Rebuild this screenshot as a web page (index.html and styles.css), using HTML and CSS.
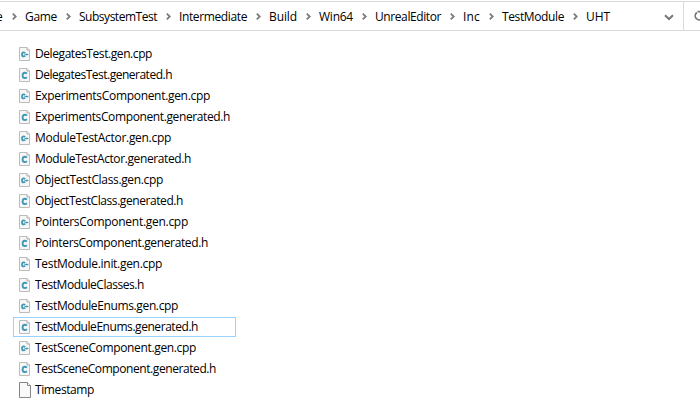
FILE: index.html
```
<!DOCTYPE html>
<html lang="en">
<head>
<meta charset="utf-8">
<title>UHT</title>
<link rel="stylesheet" href="styles.css">
</head>
<body>
<svg width="0" height="0" class="defs">
  <symbol id="sep" viewBox="0 0 5 7"><path d="M.8 .7 3.7 3.5.8 6.3" fill="none" stroke="#7c7c7c" stroke-width="1.8"/></symbol>
  <symbol id="page" viewBox="0 0 11 14"><path d="M.5.5H8L10.5 3v10.5H.5Z" fill="#f7f7f7" stroke="#bcbcbc"/><path d="M8 .5V3h2.5" fill="#fff" stroke="#aaa"/></symbol>
  <symbol id="h" viewBox="0 0 11 14"><use href="#page" width="11" height="14"/><path d="M8 5.5C7.2 4.9 6.6 4.8 5.8 4.8 4.3 4.8 3.6 5.9 3.6 7.4S4.3 10 5.8 10C6.7 10 7.3 9.8 8 9.3" fill="none" stroke="#4298b5" stroke-width="1.9"/></symbol>
  <symbol id="cpp" viewBox="0 0 11 14"><use href="#page" width="11" height="14"/><path d="M6.2 6C5.7 5.6 5.2 5.4 4.6 5.4 3.5 5.4 3 6.2 3 7.4S3.5 9.4 4.6 9.4C5.2 9.4 5.7 9.2 6.2 8.8" fill="none" stroke="#4298b5" stroke-width="1.8"/><path d="M5.5 7.5H9.4M7.8 6.5v2" fill="none" stroke="#4298b5" stroke-width="1.1"/></symbol>
  <symbol id="blank" viewBox="0 0 12 16"><path d="M.5.5H8.5L11.5 3.5v12H.5Z" fill="#f9f9f9" stroke="#858585"/><path d="M8.5.5v3h3" fill="#fff" stroke="#858585"/></symbol>
</svg>
<header class="bar">
  <nav class="path">
    <span class="edge">e</span><svg class="sep"><use href="#sep"/></svg>
    <span class="fit" data-w="32">Game</span><svg class="sep"><use href="#sep"/></svg>
    <span class="fit" data-w="78">SubsystemTest</span><svg class="sep"><use href="#sep"/></svg>
    <span class="fit" data-w="68">Intermediate</span><svg class="sep"><use href="#sep"/></svg>
    <span class="fit" data-w="28">Build</span><svg class="sep"><use href="#sep"/></svg>
    <span class="fit" data-w="34">Win64</span><svg class="sep"><use href="#sep"/></svg>
    <span class="fit" data-w="66">UnrealEditor</span><svg class="sep"><use href="#sep"/></svg>
    <span class="fit" data-w="17">Inc</span><svg class="sep"><use href="#sep"/></svg>
    <span class="fit" data-w="62">TestModule</span><svg class="sep"><use href="#sep"/></svg>
    <span class="fit" data-w="24">UHT</span>
  </nav>
  <svg class="drop" viewBox="0 0 10 7"><path d="M1 1.2 5 5 9 1.2" fill="none" stroke="#777" stroke-width="2"/></svg>
  <div class="refresh"><svg width="12" height="12" viewBox="0 0 12 12"><path d="M3.5 1.7H7.8V5.5M2.9 2.5A4.1 4.1 0 1 0 9 4" fill="none" stroke="#777" stroke-width="1.7"/></svg></div>
</header>
<ul class="files">
  <li><svg class="icon"><use href="#cpp"/></svg><span class="fit" data-w="117">DelegatesTest.gen.cpp</span></li>
  <li><svg class="icon"><use href="#h"/></svg><span class="fit" data-w="137">DelegatesTest.generated.h</span></li>
  <li><svg class="icon"><use href="#cpp"/></svg><span class="fit" data-w="175">ExperimentsComponent.gen.cpp</span></li>
  <li><svg class="icon"><use href="#h"/></svg><span class="fit" data-w="195">ExperimentsComponent.generated.h</span></li>
  <li><svg class="icon"><use href="#cpp"/></svg><span class="fit" data-w="136">ModuleTestActor.gen.cpp</span></li>
  <li><svg class="icon"><use href="#h"/></svg><span class="fit" data-w="156">ModuleTestActor.generated.h</span></li>
  <li><svg class="icon"><use href="#cpp"/></svg><span class="fit" data-w="128">ObjectTestClass.gen.cpp</span></li>
  <li><svg class="icon"><use href="#h"/></svg><span class="fit" data-w="148">ObjectTestClass.generated.h</span></li>
  <li><svg class="icon"><use href="#cpp"/></svg><span class="fit" data-w="153">PointersComponent.gen.cpp</span></li>
  <li><svg class="icon"><use href="#h"/></svg><span class="fit" data-w="173">PointersComponent.generated.h</span></li>
  <li><svg class="icon"><use href="#cpp"/></svg><span class="fit" data-w="127">TestModule.init.gen.cpp</span></li>
  <li><svg class="icon"><use href="#h"/></svg><span class="fit" data-w="109">TestModuleClasses.h</span></li>
  <li><svg class="icon"><use href="#cpp"/></svg><span class="fit" data-w="143">TestModuleEnums.gen.cpp</span></li>
  <li class="focused"><svg class="icon"><use href="#h"/></svg><span class="fit" data-w="163">TestModuleEnums.generated.h</span></li>
  <li><svg class="icon"><use href="#cpp"/></svg><span class="fit" data-w="161">TestSceneComponent.gen.cpp</span></li>
  <li><svg class="icon"><use href="#h"/></svg><span class="fit" data-w="181">TestSceneComponent.generated.h</span></li>
  <li><svg class="icon blank"><use href="#blank"/></svg><span class="fit" data-w="59">Timestamp</span></li>
</ul>
<script src="fit.js"></script>
</body>
</html>
```
FILE: styles.css
```
* { box-sizing: border-box; }
body {
  margin: 0;
  height: 418px;
  overflow: hidden;
  background: #fff;
  color: #000;
  font: 12px/20px "Segoe UI", "Open Sans", "Noto Sans", sans-serif;
}
.defs { display: block; }
.bar {
  display: flex;
  align-items: center;
  width: 712px;
  height: 30px;
  margin-top: 1px;
  border-top: 1px solid #d9d9d9;
  border-bottom: 1px solid #d9d9d9;
}
.path {
  display: flex;
  align-items: center;
  flex: none;
  width: 665px;
}
.path span { flex: none; padding-top: 1px; white-space: nowrap; }
.path .edge { width: 7px; margin-left: -4px; }
.sep { flex: none; width: 5px; height: 7px; margin: 1px 9px 0 9px; }
.sep { margin-right: 8px; }
.drop { flex: none; width: 10px; height: 7px; margin: 2px 8px 0 -1px; }
.refresh {
  display: flex;
  align-items: center;
  height: 28px;
  margin-left: 1px;
  padding-left: 10px;
  border-left: 1px solid #d9d9d9;
}
.files {
  list-style: none;
  margin: 12px 0 0 13px;
  padding: 0;
}
.files li {
  display: flex;
  align-items: center;
  width: 223px;
  height: 21px;
  padding-left: 6px;
  white-space: nowrap;
}
.files .focused {
  height: 20px;
  margin-top: 1px;
  padding-left: 5px;
  border: 1px solid #99d1ff;
}
.icon { flex: none; width: 11px; height: 14px; margin-right: 5px; }
.icon.blank { width: 12px; height: 16px; margin-right: 4px; }
.fit { display: inline-block; flex: none; }
```
FILE: fit.js
```
document.querySelectorAll(".fit").forEach(function (el) {
  var target = Number(el.dataset.w);
  var natural = el.getBoundingClientRect().width;
  el.style.letterSpacing = (target - natural) / el.textContent.length + "px";
  el.style.width = target + "px";
});
```
